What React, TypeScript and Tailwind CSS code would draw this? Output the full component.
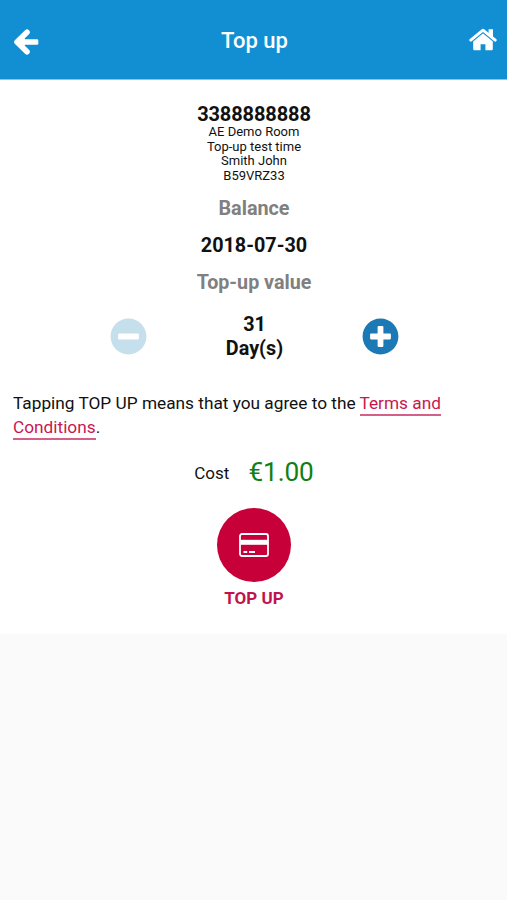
import { FaMinusCircle, FaPlusCircle } from "react-icons/fa";

function BackArrow() {
  return (
    <svg width="28" height="30" viewBox="0 0 28 30" fill="none" stroke="currentColor" strokeWidth="5.600" strokeLinecap="round" strokeLinejoin="round">
      <path d="M15 5.200 5 15l10 9.800" />
      <rect x="6" y="12.200" width="20.300" height="5.600" rx="1.300" fill="currentColor" stroke="none" />
      <path d="M8 15l5-4v8z" fill="currentColor" stroke="none" />
    </svg>
  );
}

function House() {
  return (
    <svg width="28" height="24" viewBox="0 0 28 24" fill="currentColor">
      <path d="M4.200 13.200 14 5.200l9.800 8v7.800a1.200 1.200 0 0 1-1.200 1.200h-6.200v-6h-4.800v6h-6.200A1.200 1.200 0 0 1 4.200 21z" />
      <path d="M1.800 12.100 14 2.200l12.200 9.900" fill="none" stroke="currentColor" strokeWidth="3" strokeLinejoin="round" strokeLinecap="round" />
      <path d="M19.600 1.200h4.400v8.700l-4.400-3.200z" />
      <path d="M3.300 13.700 14 4.900l10.700 8.800" fill="none" stroke="#118fd2" strokeOpacity=".65" strokeWidth=".8" />
    </svg>
  );
}

function Card() {
  return (
    <svg width="30" height="24" viewBox="0 0 30 24" fill="none" stroke="currentColor">
      <rect x="1" y="1" width="28" height="22" rx="2" strokeWidth="1.800" />
      <path d="M1 9.300h28" strokeWidth="5" />
      <path d="M4.500 19h3.700M10 19h6" strokeWidth="1.800" />
    </svg>
  );
}

export default function App() {
  return (
    <div className="flex min-h-screen flex-col bg-[#fafafa] font-['Roboto',sans-serif] text-[#111]">
      <header className="flex h-20 shrink-0 items-center justify-between border-b border-[#85c6e9] bg-[#118fd2] text-white">
        <button aria-label="Back" className="mt-1 ml-3"><BackArrow /></button>
        <h1 className="pt-px text-[22px] font-medium">Top up</h1>
        <button aria-label="Home" className="mt-px mr-2.5"><House /></button>
      </header>
      <main className="h-[554px] bg-white pl-px text-center">
        <div className="pt-[23px] text-[20px] leading-[22px] font-bold tracking-[-0.100px]">3388888888</div>
        <div className="text-[13px] leading-[14.700px]">
          <p>AE Demo Room</p><p>Top-up test time</p><p>Smith John</p><p>B59VRZ33</p>
        </div>
        <h2 className="mt-[13px] text-[19.800px] leading-6 font-bold text-[#808080]">Balance</h2>
        <p className="mt-[13px] text-[19.800px] leading-6 font-bold">2018-07-30</p>
        <h2 className="mt-[13px] text-[19.700px] leading-6 font-bold text-[#808080]">Top-up value</h2>
        <div className="mt-[18px] mr-[108px] ml-[109px] flex items-center justify-between">
          <FaMinusCircle size={37} color="#c5dfec" />
          <p className="text-[19.800px] leading-6 font-bold">31<br />Day(s)</p>
          <FaPlusCircle size={37} color="#1b7ab5" />
        </div>
        <p className="mt-[30px] px-3 text-left text-[17.250px] leading-6">Tapping TOP UP means that you agree to the <a className="border-b-2 border-[#d65f87] pb-px text-[#c8174f]">Terms and Conditions</a>.</p>
        <div className="mt-[18px] flex h-8 items-center justify-center gap-[19px]"><span className="pt-0.5 text-[17px]">Cost</span><span className="text-[26.200px] tracking-[-0.100px] text-[#108010]">€1.00</span></div>
        <button className="mx-auto mt-[19px] flex size-[74px] items-center justify-center rounded-full bg-[#c70039] text-white"><Card /></button>
        <p className="mt-1 text-[17px] leading-6 font-bold text-[#c1134b]">TOP UP</p>
      </main>
    </div>
  );
}
